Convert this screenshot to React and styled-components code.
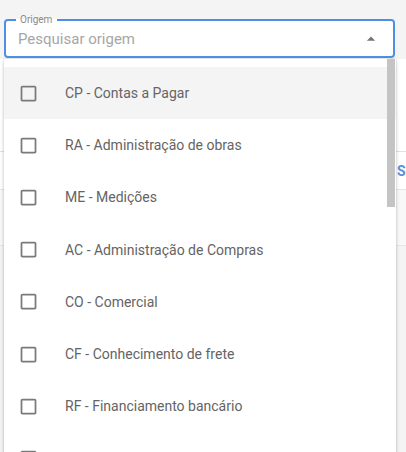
import React from "react";
import styled, { createGlobalStyle } from "styled-components";

const GlobalStyle = createGlobalStyle`
  html, body {
    margin: 0;
    padding: 0;
    background: #f4f4f4;
    overflow: hidden;
    font-family: Roboto, "Noto Sans", Arial, sans-serif;
  }
  * { box-sizing: border-box; }
`;

const Page = styled.div`
  width: 406px;
  height: 452px;
  overflow: hidden;
  display: flex;
  flex-direction: column;
  padding-top: 14px;
`;

const FieldWrap = styled.div`
  position: relative;
  margin-left: 4px;
  width: 391px;
  z-index: 2;
`;

const Fieldset = styled.fieldset`
  margin: 0;
  padding: 0 12px 0 10px;
  border: 2px solid #4f8fe3;
  border-radius: 4px;
  background: #fff;
  display: flex;
  align-items: center;
  height: 44px;
  min-width: 0;
`;

const Legend = styled.legend`
  font-size: 10px;
  line-height: 12px;
  color: #8a8a8a;
  padding: 0 5px 0 4px;
  margin-left: 0;
`;

const Input = styled.input`
  flex: 1;
  min-width: 0;
  border: none;
  outline: none;
  background: transparent;
  font-family: inherit;
  font-size: 15px;
  height: 28px;
  margin-top: -4px;
  padding: 0 0 0 2px;
  color: #333;
  caret-color: #555;
  &::placeholder {
    color: #a6a6a6;
  }
`;

const ArrowIcon = styled.svg`
  width: 20px;
  height: 20px;
  margin-top: -4px;
  fill: rgba(0, 0, 0, 0.54);
  flex-shrink: 0;
`;

const Dropdown = styled.div`
  position: absolute;
  top: calc(100% + 1px);
  left: 0;
  width: 392px;
  height: 420px;
  background: #fff;
  box-shadow: 0 2px 4px rgba(0, 0, 0, 0.18), 0 0 2px rgba(0, 0, 0, 0.14);
  overflow: hidden;
`;

const List = styled.ul`
  list-style: none;
  margin: 0;
  padding: 8px 0 0 0;
`;

const Option = styled.li`
  height: 52.2px;
  display: flex;
  align-items: center;
  padding-left: 14px;
  gap: 26px;
  background: ${(p) => (p.$active ? "#f4f4f4" : "#fff")};
  font-size: 14px;
  color: #646464;
  white-space: nowrap;
`;

const BoxIcon = styled.svg`
  width: 21px;
  height: 21px;
  fill: #7a7a7a;
  flex-shrink: 0;
`;

const ScrollThumb = styled.div`
  position: absolute;
  top: 0;
  right: 1px;
  width: 8px;
  height: 148px;
  background: #c4c4c4;
`;

const BackCard = styled.div`
  margin-top: 1px;
  width: 700px;
  display: flex;
  flex-direction: column;
`;

const BackTop = styled.div`
  height: 93px;
  background: #fff;
  border-bottom: 1px solid #e2e2e2;
`;

const BackRow = styled.div`
  height: 38px;
  display: grid;
  grid-template-columns: 397px auto;
  align-items: center;
  background: #fff;
  border-bottom: 1px solid #e6e6e6;
`;

const BackLink = styled.span`
  font-size: 14px;
  font-weight: 700;
  color: #5b8fdc;
  letter-spacing: 1px;
`;

const BackGray = styled.div`
  height: 56px;
  background: #f8f8f8;
  border-bottom: 1px solid #e6e6e6;
`;

const BackRest = styled.div`
  flex: 1;
  height: 200px;
  background: #fff;
`;

const options = [
  "CP - Contas a Pagar",
  "RA - Administração de obras",
  "ME - Medições",
  "AC - Administração de Compras",
  "CO - Comercial",
  "CF - Conhecimento de frete",
  "RF - Financiamento bancário",
  "CC - Conciliação com cartões",
];

export default function App() {
  return (
    <>
      <GlobalStyle />
      <Page>
        <FieldWrap>
          <Fieldset>
            <Legend>Origem</Legend>
            <Input placeholder="Pesquisar origem" autoFocus />
            <ArrowIcon viewBox="0 0 24 24">
              <path d="M7 14l5-5 5 5z" />
            </ArrowIcon>
          </Fieldset>
          <Dropdown>
            <List>
              {options.map((o, i) => (
                <Option key={o} $active={i === 0}>
                  <BoxIcon viewBox="0 0 24 24">
                    <path d="M19 5v14H5V5h14m0-2H5c-1.11 0-2 .9-2 2v14c0 1.1.89 2 2 2h14c1.1 0 2-.9 2-2V5c0-1.1-.9-2-2-2z" />
                  </BoxIcon>
                  {o}
                </Option>
              ))}
            </List>
            <ScrollThumb />
          </Dropdown>
        </FieldWrap>
        <BackCard>
          <BackTop />
          <BackRow>
            <span />
            <BackLink>Salvar</BackLink>
          </BackRow>
          <BackGray />
          <BackRest />
        </BackCard>
      </Page>
    </>
  );
}
